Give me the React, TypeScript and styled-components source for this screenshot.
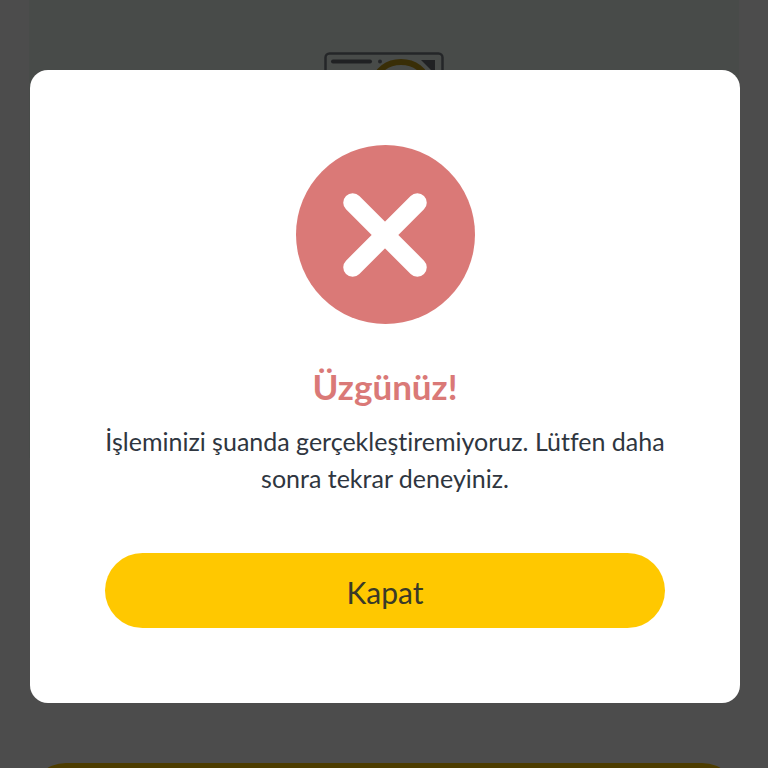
import React from "react";
import styled, { createGlobalStyle } from "styled-components";

const GlobalStyle = createGlobalStyle`
  *, *::before, *::after { box-sizing: border-box; }
  body {
    margin: 0;
    background: #ffffff;
    font-family: Lato, "Noto Sans", sans-serif;
    font-variant-ligatures: none;
    color: #2f3640;
  }
`;

const Page = styled.main`
  display: flex;
  flex-direction: column;
  height: 100vh;
  padding: 0 29px;
  overflow: hidden;
`;

const Hero = styled.section`
  display: flex;
  flex: 1;
  justify-content: center;
  align-items: flex-start;
  padding-top: 51px;
  background: linear-gradient(#f0faf4 60%, #ffffff 60%);
`;

const PageAction = styled.div`
  height: 5px;
  overflow: hidden;

  &::before {
    content: "";
    display: block;
    height: 74px;
    border-radius: 37px;
    background: #ffc800;
  }
`;

const Backdrop = styled.div`
  position: fixed;
  inset: 0;
  display: flex;
  flex-direction: column;
  padding: 70px 28px 65px 30px;
  background: rgba(0, 0, 0, 0.7);
`;

const Dialog = styled.section`
  display: flex;
  flex-direction: column;
  align-items: center;
  padding: 75px;
  border-radius: 18px;
  background: #ffffff;
  text-align: center;
`;

const Title = styled.h1`
  margin: 40px 0 0;
  font-size: 35px;
  line-height: 44px;
  font-weight: 700;
  color: #da7977;
`;

const Message = styled.p`
  margin: 15px 0 0;
  font-size: 25px;
  line-height: 37px;
`;

const CloseButton = styled.button`
  width: 100%;
  height: 75px;
  margin-top: 56px;
  padding: 2px 0 0;
  border: 0;
  border-radius: 38px;
  background: #ffc800;
  color: #3a3a28;
  font: inherit;
  font-size: 30px;
  cursor: pointer;
`;

const CardArt = () => (
  <svg width="120" height="80" viewBox="0 0 120 80" fill="none" aria-hidden="true">
    <rect x="1.5" y="2.5" width="117" height="76" rx="4" stroke="#7b8087" strokeWidth="2.5" />
    <path d="M9 10.5H46" stroke="#6b7077" strokeWidth="4" strokeLinecap="round" />
    <circle cx="56" cy="10.5" r="2" fill="#7b8087" />
    <ellipse cx="77" cy="30" rx="25" ry="19" stroke="#c09a18" strokeWidth="6" />
    <path d="M97 9h14v14Z" fill="#6b7077" />
  </svg>
);

const ErrorIcon = () => (
  <svg width="179" height="179" viewBox="0 0 180 180" fill="none" aria-hidden="true">
    <circle cx="90" cy="90" r="90" fill="#da7977" />
    <path d="M57 58L122 123M122 58L57 123" stroke="#ffffff" strokeWidth="19" strokeLinecap="round" />
  </svg>
);

export default function App() {
  return (
    <>
      <GlobalStyle />
      <Page aria-hidden="true">
        <Hero>
          <CardArt />
        </Hero>
        <PageAction />
      </Page>
      <Backdrop>
        <Dialog role="alertdialog" aria-modal="true" aria-labelledby="dialog-title" aria-describedby="dialog-message">
          <ErrorIcon />
          <Title id="dialog-title">Üzgünüz!</Title>
          <Message id="dialog-message">
            İşleminizi şuanda gerçekleştiremiyoruz. Lütfen daha sonra tekrar deneyiniz.
          </Message>
          <CloseButton type="button">Kapat</CloseButton>
        </Dialog>
      </Backdrop>
    </>
  );
}
